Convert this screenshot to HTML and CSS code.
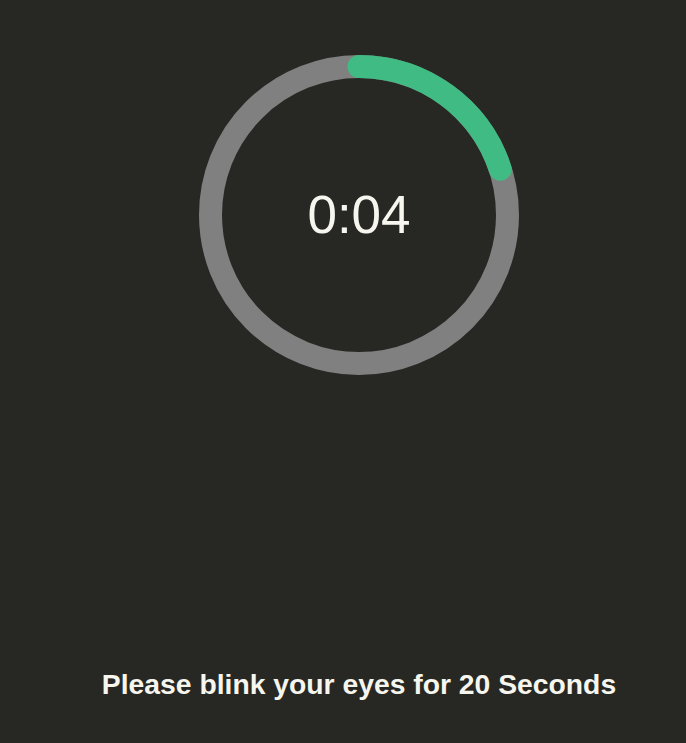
FILE: index.html
```html
<!DOCTYPE html>
<html>
<head>
<meta charset="utf-8">
<link rel="stylesheet" href="styles.css">
</head>
<body>
<main class="app">
  <div class="timer">
    <svg class="ring" width="320" height="320" viewBox="0 0 320 320">
      <circle cx="160" cy="160" r="148.5" fill="none" stroke="#808080" stroke-width="23"/>
      <circle cx="160" cy="160" r="148.5" fill="none" stroke="#3fbb83" stroke-width="23" stroke-linecap="round" stroke-dasharray="186.6 1000" transform="rotate(-90 160 160)"/>
    </svg>
    <div class="time">0:04</div>
  </div>
  <p class="message">Please blink your eyes for 20 Seconds</p>
</main>
</body>
</html>
```
FILE: styles.css
```css
html, body {
  margin: 0;
  padding: 0;
  background: #272823;
  height: 100%;
}
.app {
  display: flex;
  flex-direction: column;
  align-items: center;
  padding: 55px 0 0 32px;
  font-family: "Liberation Sans", Arial, sans-serif;
  color: #f6f6ef;
}
.timer {
  position: relative;
  width: 320px;
  height: 320px;
}
.ring {
  display: block;
}
.time {
  position: absolute;
  inset: 0 0 2px 0;
  display: flex;
  align-items: center;
  justify-content: center;
  font-size: 53px;
  line-height: 1;
}
.message {
  margin: 294px 0 0;
  font-size: 28.3px;
  font-weight: bold;
  line-height: 30px;
}
```
